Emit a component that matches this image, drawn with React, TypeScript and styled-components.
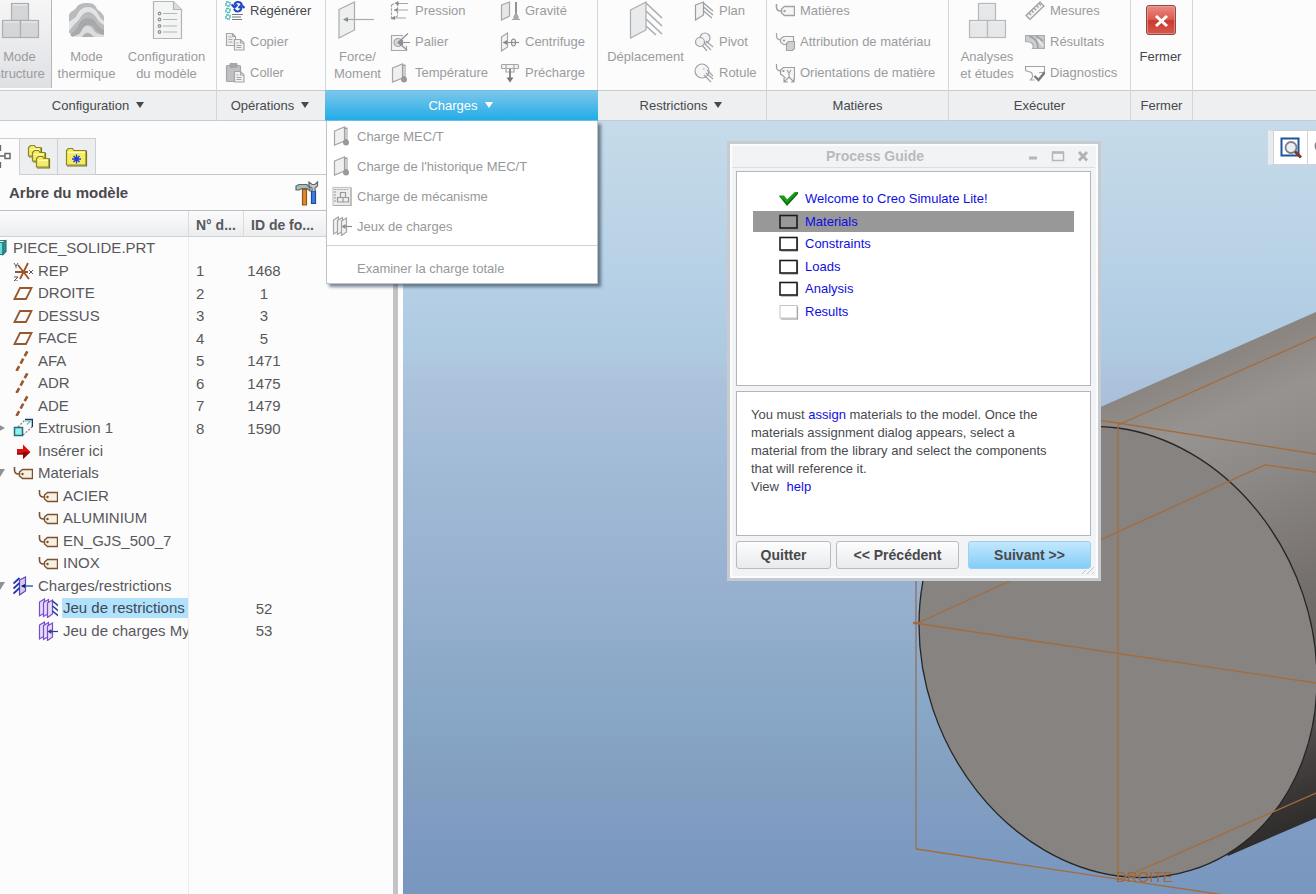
import React from "react";
import styled, { createGlobalStyle, css } from "styled-components";

const GlobalStyle = createGlobalStyle`
  *, *::before, *::after { box-sizing: border-box; }
  html, body { margin: 0; height: 100%; }
  body {
    overflow: hidden;
    font-family: "Liberation Sans", Arial, sans-serif;
    font-size: 13px;
    color: #4a4a4e;
    background: #fcfcfd;
  }
  button { font: inherit; color: inherit; }
`;

const Shell = styled.div`
  display: flex;
  flex-direction: column;
  height: 100vh;
`;

/* ---------- ribbon ---------- */

const Ribbon = styled.header`
  display: flex;
  flex: none;
  height: 121px;
  background: #fcfcfc;
`;

const Group = styled.section<{ $w?: number }>`
  position: relative;
  display: flex;
  flex-direction: column;
  flex: ${(p) => (p.$w ? `0 0 ${p.$w}px` : "1 1 0")};
  min-width: 0;
  border-right: ${(p) => (p.$w ? "1px solid #d3d5d7" : "none")};
`;

const GroupBody = styled.div<{ $end?: boolean; $pad?: number; $gap?: number }>`
  display: flex;
  justify-content: ${(p) => (p.$end ? "flex-end" : "flex-start")};
  gap: ${(p) => p.$gap ?? 0}px;
  height: 90px;
  padding: 0 4px 0 ${(p) => p.$pad ?? 8}px;
  overflow: hidden;
`;

const labelStyle = css`
  display: flex;
  align-items: center;
  justify-content: center;
  gap: 7px;
  width: 100%;
  height: 31px;
  padding: 0;
  border: 0;
  border-top: 1px solid #c9cbcd;
  border-bottom: 1px solid #c5cbd0;
  background: #edeff1;
  color: #48484c;
`;

const GroupLabel = styled.div`
  ${labelStyle}
`;

const GroupMenuButton = styled.button<{ $open?: boolean; $wide?: boolean }>`
  ${labelStyle}
  padding-right: ${(p) => (p.$wide ? 20 : 2)}px;
  ${(p) =>
    p.$open &&
    css`
      width: calc(100% + 2px);
      margin-left: -1px;
      border-color: #6cbfe6;
      background: linear-gradient(#7cc6ea, #22ace8);
      color: #fff;
    `}
`;

const BigButton = styled.button<{ $w: number; $active?: boolean; $enabled?: boolean }>`
  display: flex;
  flex: 0 0 ${(p) => p.$w}px;
  flex-direction: column;
  align-items: center;
  height: 88px;
  padding: 0;
  border: 0;
  border-right: ${(p) => (p.$active ? "1px solid #b4b6ba" : "0")};
  background: ${(p) => (p.$active ? "linear-gradient(#f6f6f7, #dfe0e4)" : "none")};
  color: ${(p) => (p.$enabled ? "#48484c" : "#9b9b9d")};
  line-height: 17px;
  text-align: center;
  white-space: pre-line;

  svg {
    flex: none;
    margin-bottom: 8px;
  }
`;

const Column = styled.div<{ $w: number }>`
  display: flex;
  flex: 0 0 ${(p) => p.$w}px;
  flex-direction: column;
  gap: 10px;
`;

const SmallButton = styled.button<{ $enabled?: boolean }>`
  display: flex;
  align-items: center;
  gap: 5px;
  height: 21px;
  padding: 0;
  border: 0;
  background: none;
  color: ${(p) => (p.$enabled ? "#48484c" : "#9b9b9d")};
  white-space: nowrap;

  svg {
    flex: none;
  }
`;

const Menu = styled.ul`
  position: absolute;
  z-index: 5;
  top: 121px;
  left: 0;
  width: 272px;
  margin: 0;
  padding: 0;
  border: 1px solid #bfc3c7;
  border-top: 0;
  background: #fff;
  box-shadow: 3px 3px 3px rgba(40, 60, 80, 0.6);
  list-style: none;
`;

const MenuItem = styled.button`
  display: flex;
  align-items: center;
  gap: 5px;
  width: 100%;
  height: 30px;
  padding: 0 0 0 5px;
  border: 0;
  background: none;
  color: #98989a;
  text-align: left;

  svg {
    flex: none;
  }
`;

const IconSlot = styled.span`
  flex: 0 0 20px;
`;

const MenuDivider = styled.li`
  height: 1px;
  margin: 4px 0 7px;
  background: #d0d2d4;
`;

/* ---------- model tree ---------- */

const Workspace = styled.div`
  display: flex;
  flex: 1 1 auto;
  min-height: 0;
`;

const TreePanel = styled.aside`
  display: flex;
  flex: 0 0 403px;
  flex-direction: column;
  min-height: 0;
  padding-top: 17px;
  border-right: 5px solid #fdfdfe;
  background: #fcfcfd;
`;

const TabStrip = styled.div`
  display: flex;
  flex: none;
  height: 37px;
  border-bottom: 1px solid #c6c8ca;
`;

const Tab = styled.button<{ $w: number; $active?: boolean }>`
  display: flex;
  align-items: center;
  justify-content: ${(p) => (p.$active ? "flex-start" : "center")};
  flex: 0 0 ${(p) => p.$w}px;
  height: 37px;
  padding: 0;
  overflow: hidden;
  border: 1px solid #cdcfd1;
  border-width: 1px 1px ${(p) => (p.$active ? "0" : "1px")} 0;
  background: ${(p) => (p.$active ? "#fcfcfd" : "#eceef0")};

  svg { flex: none; }
`;

const TreeTitle = styled.div`
  display: flex;
  align-items: center;
  justify-content: space-between;
  flex: none;
  height: 36px;
  padding: 0 79px 0 9px;
  border-bottom: 1px solid #bcbec0;
  font-size: 15px;
  font-weight: bold;
`;

const ToolsButton = styled.button`
  display: flex;
  padding: 0;
  border: 0;
  background: none;
`;

const TreeBody = styled.div`
  display: flex;
  flex: 1;
  flex-direction: column;
  min-height: 0;
  overflow: hidden;
  border-right: 5px solid #c3c3c5;
`;

const TreeTable = styled.table`
  flex: none;
  width: 100%;
  table-layout: fixed;
  border-collapse: separate;
  border-spacing: 0;
  font-size: 15px;
  color: #58585c;

  th {
    height: 26px;
    padding: 3px 0 0 7px;
    overflow: hidden;
    border-right: 1px solid #d8dadc;
    border-bottom: 1px solid #cfd1d3;
    background: linear-gradient(#fbfbfc, #ebedef);
    font-size: 14px;
    text-align: left;
    white-space: nowrap;
  }
  th:last-child { border-right: 0; }
  td { height: 22px; padding: 0; }
  tr:nth-child(even) td { height: 23px; }
  td:first-child { border-right: 1px solid #ececee; }
  td:nth-child(2) { padding-left: 7px; }
`;

const FillerColumn = styled.div`
  flex: 1;
  width: 189px;
  border-right: 1px solid #ececee;
`;

const Node = styled.div`
  display: flex;
  align-items: center;
  height: 22px;
  margin-left: -12px;
  overflow: hidden;
  white-space: nowrap;

  svg { flex: none; }
`;

const Indent = styled.span<{ $level: number }>`
  flex: 0 0 ${(p) => p.$level * 25}px;
  display: flex;
  justify-content: flex-end;
  padding-right: 8px;
`;

const NodeName = styled.span<{ $selected?: boolean }>`
  flex: 1;
  margin-left: 4px;
  padding-left: 1px;
  line-height: 20px;
  background: ${(p) => (p.$selected ? "#b1e1fb" : "none")};
  color: ${(p) => (p.$selected ? "#3c4a58" : "inherit")};
`;

const IdValue = styled.span`
  display: inline-block;
  width: 40px;
  text-align: center;
`;

/* ---------- graphics area ---------- */

const Canvas = styled.main`
  position: relative;
  flex: 1;
  min-width: 0;
  overflow: hidden;
  background: linear-gradient(
    #c6dbe9 0%,
    #b3cee4 24%,
    #aecae0 30%,
    #acc2dc 34%,
    #a0bad5 46%,
    #97b0d0 61%,
    #89a7c6 75%,
    #829fc0 86%,
    #7f9bc3 91%,
    #7897be 100%
  );
`;

const Scene = styled.svg`
  display: block;
  width: 100%;
  height: 100%;
`;

const ViewBar = styled.div`
  position: absolute;
  top: 9px;
  right: 0;
  display: flex;
  width: 48px;
  height: 35px;
  overflow: hidden;
  border: 1px solid #cfd3d7;
  border-right: 0;
  border-left: 5px solid #e8eaec;
  background: #fff;
`;

const ViewButton = styled.button`
  display: flex;
  align-items: center;
  justify-content: center;
  flex: 0 0 34px;
  padding: 0;
  border: 0;
  border-left: 1px solid #cfd3d7;
  background: #fff;
`;

const Dialog = styled.section`
  position: absolute;
  top: 20px;
  left: 324px;
  width: 374px;
  padding: 0 7px 9px 6px;
  border: 3px solid #c7cbcf;
  background: #f1f3f5;
  box-shadow: inset 0 0 0 2px #fbfcfd;
`;

const TitleBar = styled.div`
  display: flex;
  align-items: center;
  height: 24px;
  margin: 0 -4px 3px;
  border-bottom: 1px solid #dcdee0;
  color: #b8babc;
`;

const DialogTitle = styled.h1`
  flex: 1;
  margin: 0;
  padding-left: 94px;
  font-size: 14px;
  line-height: 24px;
`;

const WindowButton = styled.button`
  display: flex;
  align-items: center;
  justify-content: center;
  width: 25px;
  height: 20px;
  padding: 0;
  border: 0;
  background: none;
`;

const box = css`
  border: 1px solid #b3b5b8;
  background: #fff;
`;

const StepList = styled.ol`
  ${box}
  height: 215px;
  margin: 0 0 5px;
  padding: 16px 16px 0;
  list-style: none;
`;

const Step = styled.li<{ $current?: boolean }>`
  display: flex;
  align-items: center;
  gap: 6px;
  height: 21px;
  margin-bottom: 2px;
  padding-left: 26px;
  background: ${(p) => (p.$current ? "#989898" : "none")};

  &:nth-child(even) { margin-bottom: 1px; }
`;

const Link = styled.a`
  color: #0e0ee0;
  text-decoration: none;
`;

const Advice = styled.div`
  ${box}
  height: 145px;
  margin-bottom: 5px;
  padding: 14px 28px 0 14px;
  line-height: 18px;

  p { margin: 0; }
`;

const HelpLink = styled(Link)`
  margin-left: 4px;
`;

const Buttons = styled.div`
  display: flex;
  justify-content: space-between;
`;

const ButtonPair = styled.div`
  display: flex;
  gap: 5px;
`;

const DialogButton = styled.button<{ $w: number; $primary?: boolean }>`
  width: ${(p) => p.$w}px;
  height: 28px;
  padding: 0;
  border: 1px solid ${(p) => (p.$primary ? "#9bd0f0" : "#b9bbbe")};
  border-radius: 3px;
  background: ${(p) =>
    p.$primary ? "linear-gradient(#c3e7fc, #83cdf8)" : "linear-gradient(#fdfdfd, #e8eaec)"};
  color: #48484c;
  font-size: 14px;
  font-weight: bold;
`;

const Grip = styled.svg`
  position: absolute;
  right: 3px;
  bottom: 4px;
`;

/* ---------- icons ---------- */

type IconProps = { children: React.ReactNode; w?: number; h?: number; stroke?: string };

const Icon = ({ children, w = 20, h = 20, stroke = "#a6a6a8" }: IconProps) => (
  <svg width={w} height={h} viewBox={`0 0 ${w} ${h}`} fill="none" stroke={stroke} strokeWidth="1.2" aria-hidden="true">
    {children}
  </svg>
);

const Arrow = ({ color = "#48484c" }: { color?: string }) => (
  <svg width="8" height="8" viewBox="0 0 8 8" aria-hidden="true">
    <path d="M0 0h8L4 6z" fill={color} />
  </svg>
);

const Cubes = ({ active }: { active?: boolean }) => (
  <Icon w={40} h={40} stroke={active ? "#acaeb0" : "#b6b8ba"}>
    <g fill={active ? "#d4d5d8" : "#e6e7e8"}>
      <rect x="11.500" y="3.500" width="17" height="17" />
      <rect x="2.500" y="20.500" width="18" height="17" />
      <rect x="20.500" y="20.500" width="18" height="17" />
    </g>
    <path d="M13 5h14M4 22h15M22 22h15" stroke="#f1f2f3" />
  </Icon>
);

const Thermal = () => (
  <Icon w={40} h={40} stroke="none">
    <path d="M2 15C3 11 7 11 9 8c2-4 6-5 12-5s8 3 9 6c2 2 6 4 7 8v20H26L2 33z" fill="#b9bbbd" />
    <path d="M2 22c3-3 6-3 8-7 2-5 6-8 11-8s8 3 10 7 4 6 6 7v4c-4-2-6-5-8-8s-5-5-8-5-6 2-8 6-5 5-7 8l-4 5z" fill="#e3e4e5" />
    <path d="M3 34c4-2 6-4 8-8s5-8 10-8 7 3 9 6 4 5 7 6v5c-5-1-8-4-10-7s-4-3-6-3-5 2-7 6-6 5-9 6z" fill="#a7a9ab" />
    <path d="M6 37c5-1 7-3 9-7s4-5 7-4 4 4 6 6 6 3 9 3v2H26c-3-1-4-3-6-3s-3 2-5 3z" fill="#dcddde" />
    <path d="M15 37c2-3 4-5 7-4s4 4 6 4z" fill="#adafb1" />
  </Icon>
);

const DocList = () => (
  <Icon w={40} h={40} stroke="#b2b4b6">
    <path d="M6.500 1.500h20l8 8v29h-28z" fill="#f3f4f4" />
    <path d="M26.500 1.500v8h8" fill="#dcdddf" />
    <path d="M16 13.500h14M16 19.500h14M16 26h14M16 32h14" />
    <g stroke="#8f9193">
      <circle cx="12.500" cy="13.500" r="1.300" /><circle cx="12.500" cy="19.500" r="1.300" />
      <circle cx="12.500" cy="26" r="1.300" /><circle cx="12.500" cy="32" r="1.300" />
    </g>
  </Icon>
);

const Regenerate = () => (
  <Icon>
    <g stroke="#4dbdb8" strokeWidth="1.500">
      <rect x="1" y="1" width="4" height="4" strokeDasharray="3 1" /><rect x="1" y="7.500" width="4" height="4" strokeDasharray="3 1" />
      <rect x="1" y="14" width="4" height="4" strokeDasharray="3 1" />
    </g>
    <path d="M17 3.500C15 0 9.500 0 9.500 4.500M6.500 3.500l3 3 3-3M9 8c2 4 7.500 3 7.500-2M13.500 7 16.500 4l3 3" stroke="#1d47c4" strokeWidth="2" />
    <path d="M7 13.500h11M7 16h9M7 18.500h10" stroke="#77797b" />
  </Icon>
);

const Copy = () => (
  <Icon>
    <path d="M1.500 1.500h6l3 3v9h-9z" fill="#efefef" />
    <path d="M7.500 1.500v3h3M3.500 5h3M3.500 7.500h4M3.500 10h4" />
    <path d="M9.500 7.500h6l3.500 3.500v7h-9.500z" fill="#f1f1f1" />
    <path d="M15.500 7.500V11H19M11.500 11h2M11.500 13.500h5M11.500 15.500h5" />
  </Icon>
);

const Paste = () => (
  <Icon>
    <rect x="1.500" y="2.500" width="14" height="16" rx="1" fill="#bfc0c2" />
    <rect x="5" y="0.500" width="7" height="4" rx="1" fill="#a5a6a8" />
    <path d="M9.500 8.500h6l3.500 3.500v7H9.500z" fill="#f1f1f1" />
    <path d="M15.500 8.500V12H19M11.500 12h2M11.500 14.500h5M11.500 16.500h5" />
  </Icon>
);

const Force = () => (
  <Icon w={40} h={40} stroke="#a9abad">
    <path d="M1 9.500 16.500 2v28L1 38z" fill="#eeefef" />
    <path d="M6 19.500h30" />
    <path d="M5 19.500l5-2.500v5z" fill="#8a8c8e" stroke="none" />
  </Icon>
);

const Pressure = () => (
  <Icon>
    <path d="M1.500 4 7.500 1v14l-6 3.500z" strokeDasharray="3 1" />
    <path d="M7 2.500h11M4 9h14M5 17h11" />
    <path d="M5 2.500l3.500-2v4zM4 9l3.500-2v4zM1 17l4-2v4z" fill="#858789" stroke="none" />
  </Icon>
);

const Bearing = () => (
  <Icon>
    <path d="M13 3.500H1.500v15h15V14" fill="#f4f4f4" />
    <circle cx="8" cy="10.500" r="4" fill="#d8d9da" />
    <path d="M8 10.500 18 1.500M8 10.500h12M8 10.500 17 18" stroke="#8d8f91" />
    <path d="M7 10.500l6-3v6z" fill="#8d8f91" stroke="none" />
  </Icon>
);

const Temperature = () => (
  <Icon>
    <path d="M2.500 5 12.500 1v14l-10 4z" fill="#f0f0f1" />
    <path d="M14 1.500v14" stroke="#97999b" strokeWidth="3" />
    <path d="M14 3v10" stroke="#fff" strokeWidth="1" />
    <circle cx="14" cy="16.500" r="3" fill="#97999b" stroke="none" />
  </Icon>
);

const Gravity = () => (
  <Icon>
    <path d="M1.500 4 9.500 1v14l-8 4z" fill="#e6e7e8" />
    <path d="M16 1v15" stroke="#919395" strokeWidth="2" />
    <path d="M12 18.500h8M14 16l2-4 2 4v2h-4z" fill="#a9abad" />
  </Icon>
);

const Centrifugal = () => (
  <Icon>
    <path d="M1.500 5 7.500 1v14l-6 4z" fill="#f4f4f4" />
    <path d="M3 10.500h16" stroke="#919395" />
    <ellipse cx="13.500" cy="10.500" rx="2" ry="3.500" stroke="#8b8d8f" />
    <path d="M3 10.500l4-2.500v5z" fill="#858789" stroke="none" />
  </Icon>
);

const Preload = () => (
  <Icon>
    <rect x="1.500" y="1.500" width="17" height="4" rx="1" fill="#f4f4f4" />
    <path d="M6 1v8h8V1" />
    <path d="M10 6v10" stroke="#87898b" strokeWidth="2" />
    <path d="M6.500 14.500h7L10 19.500z" fill="#77797b" stroke="none" />
  </Icon>
);

const Displacement = () => (
  <Icon w={40} h={40} stroke="#abadaf">
    <path d="M4.500 10 20 2v28l-15.500 8z" fill="#e9eaeb" />
    <path d="M20 3 36 18M20 11 36 26M20 19 36 34M20 26 30 35" strokeWidth="1.600" />
  </Icon>
);

const PlaneIcon = () => (
  <Icon stroke="#9c9ea0">
    <path d="M1.500 4 9.500 1v13l-8 5z" fill="#f1f1f1" />
    <path d="M9.500 2 19 10M9.500 6 19 14M9.500 10 18 17" />
  </Icon>
);

const Pin = () => (
  <Icon stroke="#a0a2a4">
    <circle cx="11" cy="6" r="5" fill="#f4f4f4" /><circle cx="6" cy="10" r="4.500" fill="#f0f0f0" />
    <path d="M12 9l7 6M10 11l7 7M8 13l5 6" />
  </Icon>
);

const Ball = () => (
  <Icon stroke="#a0a2a4">
    <circle cx="8" cy="8" r="7" fill="#f4f4f4" />
    <path d="M13 7l6 6M12 10l7 6M10 12l7 7" />
    <path d="M9 6h1.500" />
  </Icon>
);

const Tag = ({ color = "#a0a2a4", fill = "#f6f6f6", top = 1 }: { color?: string; fill?: string; top?: number }) => (
  <Icon stroke={color}>
    <g transform={`translate(0 ${top})`}>
      <path d="M1.500 2v3c0 2.500 1.500 4 4 4h3" strokeWidth="1.600" />
      <path d="M9.500 4.500h10v9h-10l-3-2.500V7z" fill={fill} strokeWidth="1.400" />
      <circle cx="9.500" cy="9" r="1.200" fill={color} stroke="none" />
    </g>
  </Icon>
);

const TagAssign = () => (
  <Icon stroke="#a0a2a4">
    <path d="M1.500 1v3c0 2 1.500 4 4 4h2" />
    <path d="M8.500 4.500h10v8h-10l-3-2.500V7z" fill="#f4f4f4" />
    <circle cx="9" cy="8.500" r="1" fill="#8a8c8e" stroke="none" />
    <path d="M11.500 11.500l2-2h6v7l-2 2h-6z" fill="#cfd0d1" />
  </Icon>
);

const TagOrient = () => (
  <Icon stroke="#9c9ea0">
    <path d="M1.500 1v3c0 2 1.500 4 4 4h2" />
    <path d="M5.500 7l3-2.500h11v12M5.500 7v4l5 4" fill="#f4f4f4" />
    <circle cx="8.500" cy="8" r="1" fill="#8a8c8e" stroke="none" />
    <path d="M12 7l2 3 2-3M14 10v4M14 14l-5 5M14 14l5 5M9 15v4h4M19 15v4h-3" />
  </Icon>
);

const Ruler = () => (
  <Icon stroke="#9a9c9e">
    <path d="M1 14.500 15 1l4 4L5 18.500z" fill="#f1f1f1" />
    <path d="M4 12l2 2M6.500 9.500l2 2M9 7l2 2M11.500 4.500l2 2M14 2.500l2 2" />
  </Icon>
);

const Results = () => (
  <Icon stroke="#a9abad">
    <path d="M.5 3.500h19v13h-12c2-3 0-7-7-7z" fill="#cdcecf" />
    <path d="M4 4c6 2 9 5 9 12M11 4c3 2 5 4 7 5" stroke="#a0a2a4" strokeWidth="2" />
    <path d="M13 7c1 3 3 4 5 7" stroke="#e9e9e9" strokeWidth="2" />
  </Icon>
);

const Diagnostics = () => (
  <Icon stroke="#a2a4a6">
    <path d="M14 9.500h5.500v-6H.5v4l6 2c2 4 1 5-1 7.500h4" />
    <path d="M9.500 13 13.500 17 20 9" stroke="#77797b" strokeWidth="2.400" />
  </Icon>
);

const CloseBig = () => (
  <svg width="40" height="40" viewBox="0 0 40 40" aria-hidden="true">
    <defs>
      <linearGradient id="red" x1="0" y1="0" x2="0" y2="1">
        <stop offset="0" stopColor="#ea8d84" /><stop offset=".5" stopColor="#da564b" />
        <stop offset=".52" stopColor="#c93a2e" /><stop offset="1" stopColor="#d8584c" />
      </linearGradient>
    </defs>
    <rect x="5.500" y="5.500" width="29" height="29" rx="2.500" fill="url(#red)" stroke="#8e4a48" />
    <rect x="6.500" y="6.500" width="27" height="27" rx="1.500" fill="none" stroke="#f0a8a0" strokeOpacity=".6" />
    <path d="M15 16l11 10M26 16 15 26" stroke="#fff" strokeWidth="3" />
  </svg>
);

const Mechanism = () => (
  <Icon>
    <rect x="1" y="1.500" width="18" height="18" fill="#ededee" stroke="#c5c6c8" />
    <path d="M3 16V3.500h13" stroke="#a5a6a8" strokeDasharray="2 1" />
    <path d="M8.500 6.500h5v5h-5zM5.500 11.500H11v4.500H5.500zM11 11.500h5.500v4.500H11z" stroke="#97999b" />
    <path d="M19 2v17.500H2" stroke="#acaeb0" />
  </Icon>
);

const LoadSets = ({ edge = "#a2a4a6", fill = "#f1f1f2", arrow = "#8d8f91" }) => (
  <Icon stroke={edge}>
    <path d="M1.500 4 6.500 1v14l-5 3z" fill={fill} /><path d="M5.500 4.500l5-3v14l-5 3z" fill={fill} />
    <path d="M9.500 5l5-3v14l-5 3.500z" fill={fill} />
    <path d="M11 10.500h9" stroke={arrow} />
    <path d="M9.500 10.500l4-2.500v5z" fill={arrow} stroke="none" />
  </Icon>
);

const ConstraintSet = () => (
  <Icon stroke="#7a4cc8">
    <path d="M1.500 4 6.500 1v14l-5 3z" fill="#e6dcf8" /><path d="M5.500 4.500l5-3v14l-5 3z" fill="#e6dcf8" />
    <path d="M9.500 5l5-3v14l-5 3.500z" fill="#e6dcf8" />
    <path d="M14.500 3l6 5M14.500 8l6 5M14.500 13l6 5" stroke="#22409e" strokeWidth="1.600" />
  </Icon>
);

const LoadsConstraints = () => (
  <Icon stroke="#5c48b0">
    <path d="M6.500 4 12.500 1v14l-6 4z" fill="#d4c8f2" />
    <path d="M6.500 2 .5 7.500M6.500 7 .5 12.500M6.500 12 .5 17.500" stroke="#2038b8" strokeWidth="1.800" />
    <path d="M9 10h11" stroke="#1f62b8" strokeWidth="1.400" />
    <path d="M8 10l4-2v4z" fill="#101c60" stroke="none" />
  </Icon>
);

const Part = () => (
  <Icon stroke="#2c7878">
    <path d="M4 4.500h11v12H4z" fill="#63dede" />
    <path d="M15 4.500l3-2v11l-3 3z" fill="#2f8e90" /><path d="M5 4.500l3-2h10" />
  </Icon>
);

const Csys = () => (
  <Icon stroke="#9a5428">
    <path d="M2 11h13M5 4l11 14M15 2 7 18" strokeWidth="1.800" />
    <path d="M1 2l2 3 2-3M3 5v2M1 16h4l-4 4h4M16 9l4 4M20 9l-4 4" stroke="#55575a" strokeWidth="1" />
  </Icon>
);

const Datum = () => (
  <Icon stroke="#98582e">
    <path d="M1.500 16 7 5h11.500L13 16z" strokeWidth="1.800" />
  </Icon>
);

const Axis = () => (
  <Icon stroke="#98582e">
    <path d="M3.500 20 14.500 0" strokeWidth="2.600" strokeDasharray="5.500 3" />
  </Icon>
);

const Extrude = () => (
  <Icon stroke="#2e6e70">
    <path d="M5 9l7-7M10 17l9-8" stroke="#77797b" strokeDasharray="2 1.500" />
    <path d="M12 1.500h7.500V9" stroke="#223355" strokeWidth="1.600" />
    <path d="M12 3h5.500L14 6.500" stroke="#5fc8c8" />
    <rect x="1.500" y="9.500" width="8" height="8" fill="#8ef0f0" strokeWidth="1.500" />
  </Icon>
);

const Insert = () => (
  <Icon stroke="none">
    <path d="M4 8h6V3.500L17.500 11 10 18v-4.500H4z" fill="#e01010" />
    <path d="M4 12h6v-1h7L10 18v-4.500H4z" fill="#8e0a0a" />
  </Icon>
);

const Folder = ({ x, y, w = 13, h = 9 }: { x: number; y: number; w?: number; h?: number }) => (
  <g transform={`translate(${x} ${y})`}>
    <path d={`M.5 ${h + 2}V2.500L2.500.5h4L8 2.500h${w - 8}v${h - 0.5}z`} fill="#f4ec62" stroke="#8a8628" />
    <path d={`M2 4.500h${w - 3}`} stroke="#fdfbc0" />
    <path d={`M${w + 0.5} 3v${h}H1`} stroke="#77731e" />
  </g>
);

const Folders = () => (
  <Icon w={26} h={26}><Folder x={2} y={1} /><Folder x={6} y={6} /><Folder x={10} y={12} /></Icon>
);

const Favorites = () => (
  <Icon w={26} h={26}>
    <Folder x={2} y={4} w={20} h={15} />
    <path d="M12.500 10.500v9M8 15h9M9.500 12l6 6M15.500 12l-6 6" stroke="#1c3cd8" strokeWidth="1.400" />
  </Icon>
);

const TreeTab = () => (
  <Icon stroke="#66686a" w={18} h={26}>
    <path d="M0 12h5M.5 1v6M.5 18v6" strokeWidth="1.300" />
    <rect x="5" y="9.500" width="5" height="5" strokeWidth="1.500" />
  </Icon>
);

const Tools = () => (
  <Icon w={24} h={26}>
    <path d="M1 10V6l3-1.500h8L15 8v3l-3-2.500H7L4 10z" fill="#a9bcb8" stroke="#5c6c6c" />
    <path d="M7.500 9.500h4V25h-4z" fill="#e08a2c" stroke="#94541c" />
    <path d="M16.500 11h4v12.500h-4z" fill="#3f7ce0" stroke="#1e4a9c" />
    <path d="M17 11V8L14 6V2l3 2.500h3L22.500 2v4L20 8v3" fill="#c9cdd0" stroke="#66686c" />
  </Icon>
);

const ZoomFit = () => (
  <Icon w={22} h={22}>
    <rect x="1.500" y="1.500" width="17" height="17" fill="#fff" stroke="#24509c" strokeWidth="2" />
    <circle cx="11" cy="10.500" r="5.500" fill="#e8eef2" stroke="#7c8084" strokeWidth="1.800" />
    <path d="M15 14.500l6 6" stroke="#7c3c22" strokeWidth="3" />
  </Icon>
);

const ZoomIn = () => (
  <Icon w={22} h={22}><circle cx="8" cy="9" r="6.500" stroke="#7c8084" strokeWidth="1.800" /></Icon>
);

const Check = () => (
  <Icon w={20} h={16} stroke="none">
    <path d="M0 5h5l3 4 8-8h3v2L8 15z" fill="#176c17" />
    <path d="M0 4.500h5l3 4L16 1h3L8 12z" fill="#15a015" />
  </Icon>
);

const StepBox = ({ faint, clear }: { faint?: boolean; clear?: boolean }) => (
  <Icon w={20} h={16}>
    <path d="M18.500 2.500v12.500H2" stroke={faint ? "#8b8b8b" : "#8a8a8a"} />
    <rect x="1" y="1.500" width="17" height="12.500" fill={clear ? "none" : "#fff"} stroke={faint ? "#c5c5c5" : "#1c1c1c"} strokeWidth={faint ? 1 : 1.6} />
  </Icon>
);

const Expander = ({ open }: { open: boolean }) => (
  <svg width="10" height="10" viewBox="0 0 10 10" aria-hidden="true">
    <path d={open ? "M0 1h10L5 9z" : "M3 1l7 4-7 4z"} fill="#8e9092" />
  </svg>
);

/* ---------- data ---------- */

const purple = <LoadSets edge="#7a4cc8" fill="#e6dcf8" arrow="#2c3c98" />;
const brownTag = <Tag color="#7a5232" fill="#f6f0e0" top={2} />;

type TreeRow = { level: number; name: string; icon: React.ReactNode; no?: number; id?: number; open?: boolean; selected?: boolean };

const tree: TreeRow[] = [
  { level: 0, name: "PIECE_SOLIDE.PRT", icon: <Part /> },
  { level: 1, name: "REP", icon: <Csys />, no: 1, id: 1468 },
  { level: 1, name: "DROITE", icon: <Datum />, no: 2, id: 1 },
  { level: 1, name: "DESSUS", icon: <Datum />, no: 3, id: 3 },
  { level: 1, name: "FACE", icon: <Datum />, no: 4, id: 5 },
  { level: 1, name: "AFA", icon: <Axis />, no: 5, id: 1471 },
  { level: 1, name: "ADR", icon: <Axis />, no: 6, id: 1475 },
  { level: 1, name: "ADE", icon: <Axis />, no: 7, id: 1479 },
  { level: 1, name: "Extrusion 1", icon: <Extrude />, no: 8, id: 1590, open: false },
  { level: 1, name: "Insérer ici", icon: <Insert /> },
  { level: 1, name: "Materials", icon: brownTag, open: true },
  { level: 2, name: "ACIER", icon: brownTag },
  { level: 2, name: "ALUMINIUM", icon: brownTag },
  { level: 2, name: "EN_GJS_500_7", icon: brownTag },
  { level: 2, name: "INOX", icon: brownTag },
  { level: 1, name: "Charges/restrictions", icon: <LoadsConstraints />, open: true },
  { level: 2, name: "Jeu de restrictions", icon: <ConstraintSet />, id: 52, selected: true },
  { level: 2, name: "Jeu de charges My", icon: purple, id: 53 },
];

const steps = [
  { name: "Welcome to Creo Simulate Lite!", icon: <Check /> },
  { name: "Materials", icon: <StepBox clear />, current: true },
  { name: "Constraints", icon: <StepBox /> },
  { name: "Loads", icon: <StepBox /> },
  { name: "Analysis", icon: <StepBox /> },
  { name: "Results", icon: <StepBox faint /> },
];

const Small = ({ icon, label, enabled }: { icon: React.ReactNode; label: string; enabled?: boolean }) => (
  <SmallButton $enabled={enabled}>{icon}{label}</SmallButton>
);

const Model = () => (
  <Scene viewBox="403 121 913 773" preserveAspectRatio="xMinYMin slice" aria-hidden="true">
    <defs>
      <linearGradient id="body" gradientUnits="userSpaceOnUse" x1="1180" y1="373" x2="1350" y2="804">
        <stop offset="0" stopColor="#8a8581" />
        <stop offset=".12" stopColor="#979390" />
        <stop offset=".26" stopColor="#8d8986" />
        <stop offset=".45" stopColor="#7c7775" />
        <stop offset=".75" stopColor="#5c5957" />
        <stop offset=".93" stopColor="#3a3736" />
        <stop offset="1" stopColor="#302e2d" />
      </linearGradient>
    </defs>
    <path d="M1030 438 1316 312 1616 180V692L1316 818 1228 856z" fill="url(#body)" />
    <circle r="1" transform="matrix(199 27 0 224 1118 652)" fill="#868380" stroke="#262626" strokeWidth="1.300" vectorEffect="non-scaling-stroke" />
    <g fill="none" stroke="#a46c3c" strokeWidth="1.300">
      <path d="M916 396V849" stroke="#8e7c70" strokeWidth="1.600" />
      <path d="M916 849 1217 894 1316 908" />
      <path d="M916 396 1118 423 1316 454 1616 499" />
      <path d="M1118 425V880" />
      <path d="M1118 425 1316 337 1616 204" />
      <path d="M920 622 1265 465 1316 472 1616 512" />
      <path d="M914 623 1316 683 1616 727" />
      <path d="M1118 880 1316 793 1616 661" />
      <path d="M913 623h8" strokeWidth="2.500" />
    </g>
    <text x="1116" y="882" fontSize="15" fill="#a06838">DROITE</text>
  </Scene>
);

export default function App() {
  return (
    <Shell>
      <GlobalStyle />
      <Ribbon>
        <Group $w={217}>
          <GroupBody $end>
            <BigButton $w={64} $active><Cubes active />{"Mode\nstructure"}</BigButton>
            <BigButton $w={69}><Thermal />{"Mode\nthermique"}</BigButton>
            <BigButton $w={91}><DocList />{"Configuration\ndu modèle"}</BigButton>
          </GroupBody>
          <GroupMenuButton $wide>Configuration <Arrow /></GroupMenuButton>
        </Group>
        <Group $w={109}>
          <GroupBody>
            <Column $w={90}>
              <Small icon={<Regenerate />} label="Régénérer" enabled />
              <Small icon={<Copy />} label="Copier" />
              <Small icon={<Paste />} label="Coller" />
            </Column>
          </GroupBody>
          <GroupMenuButton>Opérations <Arrow /></GroupMenuButton>
        </Group>
        <Group $w={272}>
          <GroupBody $pad={3} $gap={4}>
            <BigButton $w={57}><Force />{"Force/\nMoment"}</BigButton>
            <Column $w={106}>
              <Small icon={<Pressure />} label="Pression" />
              <Small icon={<Bearing />} label="Palier" />
              <Small icon={<Temperature />} label="Température" />
            </Column>
            <Column $w={90}>
              <Small icon={<Gravity />} label="Gravité" />
              <Small icon={<Centrifugal />} label="Centrifuge" />
              <Small icon={<Preload />} label="Précharge" />
            </Column>
          </GroupBody>
          <GroupMenuButton $open aria-expanded="true">Charges <Arrow color="#fff" /></GroupMenuButton>
          <Menu>
            <li><MenuItem><Temperature />Charge MEC/T</MenuItem></li>
            <li><MenuItem><Temperature />Charge de l'historique MEC/T</MenuItem></li>
            <li><MenuItem><Mechanism />Charge de mécanisme</MenuItem></li>
            <li><MenuItem><LoadSets />Jeux de charges</MenuItem></li>
            <MenuDivider />
            <li><MenuItem><IconSlot />Examiner la charge totale</MenuItem></li>
          </Menu>
        </Group>
        <Group $w={169}>
          <GroupBody $pad={3} $gap={4}>
            <BigButton $w={89}><Displacement />Déplacement</BigButton>
            <Column $w={66}>
              <Small icon={<PlaneIcon />} label="Plan" />
              <Small icon={<Pin />} label="Pivot" />
              <Small icon={<Ball />} label="Rotule" />
            </Column>
          </GroupBody>
          <GroupMenuButton>Restrictions <Arrow /></GroupMenuButton>
        </Group>
        <Group $w={182}>
          <GroupBody>
            <Column $w={166}>
              <Small icon={<Tag />} label="Matières" />
              <Small icon={<TagAssign />} label="Attribution de matériau" />
              <Small icon={<TagOrient />} label="Orientations de matière" />
            </Column>
          </GroupBody>
          <GroupLabel>Matières</GroupLabel>
        </Group>
        <Group $w={182}>
          <GroupBody $pad={0}>
            <BigButton $w={76}><Cubes />{"Analyses\net études"}</BigButton>
            <Column $w={100}>
              <Small icon={<Ruler />} label="Mesures" />
              <Small icon={<Results />} label="Résultats" />
              <Small icon={<Diagnostics />} label="Diagnostics" />
            </Column>
          </GroupBody>
          <GroupLabel>Exécuter</GroupLabel>
        </Group>
        <Group $w={62}>
          <GroupBody $pad={2}>
            <BigButton $w={55} $enabled><CloseBig />Fermer</BigButton>
          </GroupBody>
          <GroupLabel>Fermer</GroupLabel>
        </Group>
        <Group>
          <GroupBody />
          <GroupLabel />
        </Group>
      </Ribbon>

      <Workspace>
        <TreePanel>
          <TabStrip>
            <Tab $w={20} $active aria-label="Arbre"><TreeTab /></Tab>
            <Tab $w={38} aria-label="Dossiers"><Folders /></Tab>
            <Tab $w={38} aria-label="Favoris"><Favorites /></Tab>
          </TabStrip>
          <TreeTitle>
            Arbre du modèle
            <ToolsButton aria-label="Outils"><Tools /></ToolsButton>
          </TreeTitle>
          <TreeBody>
            <TreeTable>
              <colgroup><col width="189" /><col width="55" /><col /></colgroup>
              <thead>
                <tr><th /><th>N° d...</th><th>ID de fo...</th></tr>
              </thead>
              <tbody>
                {tree.map((row) => (
                  <tr key={row.name}>
                    <td>
                      <Node>
                        {row.level > 0 && (
                          <Indent $level={row.level}>{row.open !== undefined && <Expander open={row.open} />}</Indent>
                        )}
                        {row.icon}
                        <NodeName $selected={row.selected}>{row.name}</NodeName>
                      </Node>
                    </td>
                    <td>{row.no}</td>
                    <td><IdValue>{row.id}</IdValue></td>
                  </tr>
                ))}
              </tbody>
            </TreeTable>
            <FillerColumn />
          </TreeBody>
        </TreePanel>

        <Canvas>
          <Model />
          <ViewBar>
            <ViewButton aria-label="Recadrer"><ZoomFit /></ViewButton>
            <ViewButton aria-label="Zoom"><ZoomIn /></ViewButton>
          </ViewBar>
          <Dialog role="dialog" aria-label="Process Guide">
            <TitleBar>
              <DialogTitle>Process Guide</DialogTitle>
              <WindowButton aria-label="Réduire">
                <Icon w={12} h={12} stroke="#b4b6b8"><path d="M2 8h8" strokeWidth="3" /></Icon>
              </WindowButton>
              <WindowButton aria-label="Agrandir">
                <Icon w={14} h={12} stroke="#b4b6b8"><path d="M1.500 2v8.500h11V2M1 2.500h12" strokeWidth="1.500" /><path d="M1 2.500h12" strokeWidth="2.500" /></Icon>
              </WindowButton>
              <WindowButton aria-label="Fermer">
                <Icon w={12} h={12} stroke="#b0b2b4"><path d="M2 2l8 8.500M10 2 2 10.500" strokeWidth="2.800" /></Icon>
              </WindowButton>
            </TitleBar>
            <StepList>
              {steps.map((s) => (
                <Step key={s.name} $current={s.current}>{s.icon}<Link href="#">{s.name}</Link></Step>
              ))}
            </StepList>
            <Advice>
              <p>
                You must <Link href="#">assign</Link> materials to the model. Once the materials assignment
                dialog appears, select a material from the library and select the components that will reference it.
              </p>
              <p>View <HelpLink href="#">help</HelpLink></p>
            </Advice>
            <Buttons>
              <ButtonPair>
                <DialogButton $w={95}>Quitter</DialogButton>
                <DialogButton $w={123}>{"<< Précédent"}</DialogButton>
              </ButtonPair>
              <DialogButton $w={123} $primary>{"Suivant >>"}</DialogButton>
            </Buttons>
            <Grip width="14" height="12" viewBox="0 0 14 12" stroke="#c0c4c8" fill="none">
              <path d="M1 12l4-4M6 12l7-7M11 12l2-2" />
            </Grip>
          </Dialog>
        </Canvas>
      </Workspace>
    </Shell>
  );
}
